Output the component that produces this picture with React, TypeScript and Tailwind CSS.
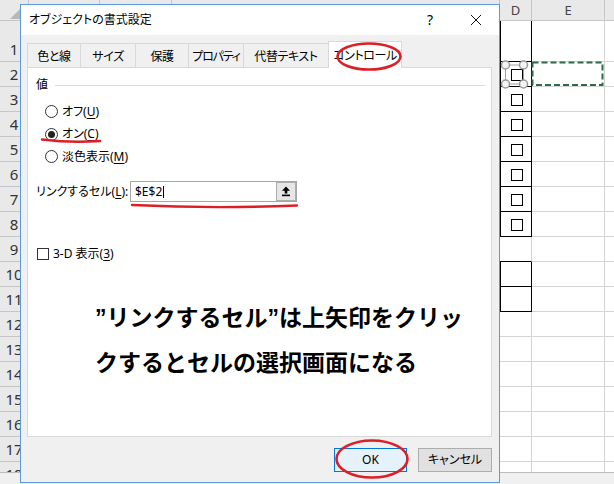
import React from "react";

const ROWS = Array.from({ length: 18 }, (_, i) => i + 1);
const BLACK_D = [1, 2, 3, 4, 5, 6, 7, 8, 10, 11];

function Radio({ checked }: { checked?: boolean }) {
  return (
    <span className="w-[13px] h-[13px] rounded-full border border-[#333] bg-white flex items-center justify-center shrink-0">
      {checked && <span className="w-[7px] h-[7px] rounded-full bg-[#222]" />}
    </span>
  );
}

function U({ c }: { c: string }) {
  return <span className="underline underline-offset-[2px] decoration-1">{c}</span>;
}

function Q() {
  return <span className="font-['Liberation_Sans',sans-serif]">”</span>;
}

function Sheet() {
  return (
    <div className="flex flex-col w-[614px] h-[484px]">
      <div className="flex h-[21px] shrink-0 bg-[#e9e9e9] text-[13px] leading-[20px] text-[#444]">
        <div className="w-[29px] shrink-0 border-r border-b border-[#c6c6c6]">
          <svg width="29" height="20" className="block">
            <polygon points="10,19 24,19 24,5" fill="#b8b8b8" />
          </svg>
        </div>
        <div className="w-[71px] shrink-0 border-r border-b border-[#c6c6c6]" />
        <div className="w-[72px] shrink-0 border-r border-b border-[#c6c6c6]" />
        <div className="w-[328px] shrink-0 border-r border-b border-[#c6c6c6]" />
        <div className="w-[32px] shrink-0 border-r border-b border-[#c6c6c6] text-center">D</div>
        <div className="w-[73px] shrink-0 border-r border-b border-[#c6c6c6] text-center">E</div>
        <div className="flex-1 border-b border-[#c6c6c6]" />
      </div>
      <div className="h-[451px] overflow-hidden shrink-0">
        {ROWS.map((n) => {
          const black = BLACK_D.includes(n);
          const box = n >= 2 && n <= 8;
          return (
            <div key={n} className={n === 1 ? "flex h-[41px]" : "flex h-[25px]"}>
              <div className="w-[29px] shrink-0 bg-[#e9e9e9] border-r border-b border-[#c6c6c6] flex items-end justify-center pb-[3px] text-[15px] leading-[18px] text-[#333]">
                {n}
              </div>
              <div className="w-[71px] shrink-0 border-r border-b border-[#d4d4d4]" />
              <div className="w-[72px] shrink-0 border-r border-b border-[#d4d4d4]" />
              <div className="w-[328px] shrink-0 border-r border-b border-[#d4d4d4]" />
              <div
                className={
                  black
                    ? "w-[32px] shrink-0 border-l border-r border-b border-black flex items-start pl-[10px] pt-[7px]"
                    : n === 9
                    ? "w-[32px] shrink-0 border-r border-b border-r-[#d4d4d4] border-b-black"
                    : "w-[32px] shrink-0 border-r border-b border-[#d4d4d4]"
                }
              >
                {box && <span className="w-[12px] h-[12px] border border-black bg-white" />}
              </div>
              <div className="w-[73px] shrink-0 border-r border-b border-[#d4d4d4]" />
              <div className="flex-1 border-b border-[#d4d4d4]" />
            </div>
          );
        })}
      </div>
      <div className="flex-1 border-t border-[#bdbdbd] bg-[#f0f0f0]" />
    </div>
  );
}

function Dialog() {
  const tabs = [
    { t: "色と線", w: "w-[53px]", tr: "tracking-[-0.4px]" },
    { t: "サイズ", w: "w-[55px]", tr: "tracking-[-0.4px]" },
    { t: "保護", w: "w-[53px]", tr: "tracking-[-0.4px]" },
    { t: "プロパティ", w: "w-[55px]", tr: "tracking-[-1.2px]" },
    { t: "代替テキスト", w: "w-[85px]", tr: "tracking-[-0.4px]" },
  ];
  return (
    <div className="absolute left-[20px] top-[4px] w-[480px] h-[479px] border border-[#5a9ad6] bg-[#f0f0f0] flex flex-col text-[12px] text-black [font-feature-settings:'palt']">
      <div className="h-[30px] bg-white flex items-center shrink-0">
        <span className="pl-[8px] leading-[16px]">オブジェクトの書式設定</span>
        <div className="ml-auto flex h-full">
          <div className="w-[46px] flex items-center justify-center text-[14px] leading-[16px]">?</div>
          <div className="w-[46px] flex items-center justify-center">
            <svg width="12" height="12" viewBox="0 0 12 12">
              <path d="M1 1 L11 11 M11 1 L1 11" stroke="#111" strokeWidth="1" fill="none" />
            </svg>
          </div>
        </div>
      </div>
      <div className="flex-1 flex flex-col pl-[6px] pr-[7px]">
        <div className="mt-[8px] h-[24px] flex items-end relative z-10 shrink-0">
          {tabs.map((tb) => (
            <div
              key={tb.t}
              className={`${tb.w} ${tb.tr} h-[24px] shrink-0 border-t border-l border-[#d9d9d9] bg-[#f0f0f0] flex justify-center pt-[5px] leading-[16px] whitespace-nowrap`}
            >
              {tb.t}
            </div>
          ))}
          <div className="w-[74px] h-[27px] mb-[-1px] shrink-0 border-t border-l border-r border-[#d9d9d9] bg-white flex justify-center pt-[6px] leading-[16px] tracking-[-0.4px] whitespace-nowrap">
            コントロール
          </div>
        </div>
        <div className="h-[370px] shrink-0 border border-[#d9d9d9] bg-white flex flex-col">
          <div className="mt-[9px] h-[16px] flex items-center pl-[8px] leading-[16px]">
            <span>値</span>
            <span className="flex-1 ml-[7px] mr-[6px] h-px bg-[#dcdcdc]" />
          </div>
          <div className="mt-[7px] pl-[17px] flex flex-col leading-[16px]">
            <div className="h-[23px] flex items-center gap-[4px]">
              <Radio />
              <span>
                オフ(<U c="U" />)
              </span>
            </div>
            <div className="h-[22px] flex items-center gap-[4px]">
              <Radio checked />
              <span>
                オン(<U c="C" />)
              </span>
            </div>
            <div className="h-[23px] flex items-center gap-[4px]">
              <Radio />
              <span>
                淡色表示(<U c="M" />)
              </span>
            </div>
          </div>
          <div className="mt-[13px] h-[21px] flex items-center pl-[8px] leading-[16px]">
            <span className="w-[94px] shrink-0">
              リンクするセル(<U c="L" />):
            </span>
            <div className="w-[167px] h-[21px] border border-[#a6a6a6] flex items-center pl-[4px]">
              <span className="leading-[16px]">$E$2</span>
              <span className="w-px h-[12px] bg-black ml-[1px]" />
              <div className="ml-auto h-full w-[20px] border border-[#adadad] bg-[#e6e6e6] flex items-center justify-center">
                <svg width="10" height="11" viewBox="0 0 10 11">
                  <path d="M5 0.5 L9 4.8 L6.3 4.8 L6.3 7.5 L3.7 7.5 L3.7 4.8 L1 4.8 Z" fill="#000" />
                  <rect x="1" y="8.6" width="8" height="1.6" fill="#000" />
                </svg>
              </div>
            </div>
          </div>
          <div className="mt-[45px] h-[14px] pl-[9px] flex items-center leading-[16px]">
            <span className="w-[12px] h-[12px] border border-[#333] bg-white shrink-0" />
            <span className="ml-[4px]">
              3-D 表示(<U c="3" />)
            </span>
          </div>
          <div className="mt-[34px] pl-[67px] text-[23px] font-bold leading-[44px] [font-feature-settings:normal] text-black">
            <div>
              <Q />
              リンクするセル
              <Q />
              は上矢印をクリッ
            </div>
            <div>クするとセルの選択画面になる</div>
          </div>
        </div>
        <div className="mt-[11px] flex justify-end gap-[11px]">
          <div className="w-[73px] h-[24px] border border-[#0078d7] bg-[#e5f1fb] flex items-center justify-center leading-[16px]">
            OK
          </div>
          <div className="w-[74px] h-[24px] border border-[#adadad] bg-[#e1e1e1] flex items-center justify-center leading-[16px]">
            キャンセル
          </div>
        </div>
      </div>
    </div>
  );
}

function Overlay() {
  const red = "#dc1f26";
  return (
    <svg className="absolute left-0 top-0 z-20 pointer-events-none" width="614" height="484" viewBox="0 0 614 484">
      <ellipse cx="369" cy="56.5" rx="31.5" ry="13" fill="none" stroke={red} strokeWidth="2.6" />
      <ellipse cx="372" cy="459" rx="35.5" ry="18.5" fill="none" stroke={red} strokeWidth="2.6" />
      <path d="M42 139.5 Q70 143 100 141" fill="none" stroke={red} strokeWidth="2.4" strokeLinecap="round" />
      <path d="M132 205 Q214 209 297 205.5" fill="none" stroke={red} strokeWidth="2.4" strokeLinecap="round" />
      <rect x="532.5" y="62.5" width="70" height="22.5" fill="none" stroke="#2f6b4b" strokeWidth="2" strokeDasharray="6 3" />
      <path d="M505.5 65 H523.5 V84 H505.5 Z" fill="none" stroke="#a0a0a0" strokeWidth="1" />
      {[
        [505.5, 65],
        [523.5, 65],
        [505.5, 84],
        [523.5, 84],
      ].map(([x, y]) => (
        <circle key={`${x}-${y}`} cx={x} cy={y} r="4" fill="#f4f4f4" stroke="#9a9a9a" strokeWidth="1.5" />
      ))}
    </svg>
  );
}

export default function App() {
  return (
    <div className="relative w-[614px] h-[484px] overflow-hidden bg-white font-['Noto_Sans','Noto_Sans_CJK_JP',sans-serif]">
      <Sheet />
      <Dialog />
      <Overlay />
    </div>
  );
}
